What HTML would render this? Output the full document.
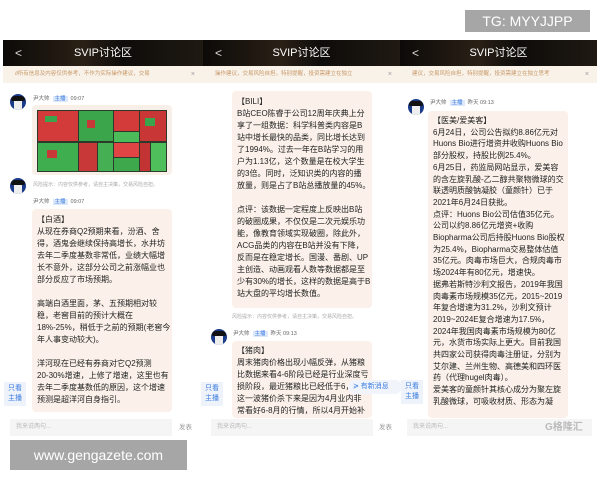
<!DOCTYPE html><html><head><meta charset="utf-8"><style>
*{margin:0;padding:0;box-sizing:border-box}
body{width:600px;height:480px;background:#fff;position:relative;overflow:hidden;font-family:"Liberation Sans","Noto Sans CJK SC",sans-serif;color:#333}
.a{position:absolute}
.hd{position:absolute;top:40px;height:26px;background:linear-gradient(90deg,#0c0a08,#2a2016 40%,#0e0c0a 60%,#1f1912);color:#fff;font-size:11px;text-align:center;line-height:26px}
.hd i{position:absolute;left:12px;top:0;font-style:normal;font-size:12px;color:#ddd}
.nt{position:absolute;top:66px;height:17px;background:#f8f2e9;color:#c9996a;font-size:5.5px;line-height:17px;white-space:nowrap;overflow:hidden;padding-left:6px}
.nt b{position:absolute;right:8px;font-weight:normal;color:#999;font-size:7px}
.av{position:absolute;width:16px;height:16px;border-radius:50%;background:#1a3a8a;overflow:hidden}
.av:after{content:"";position:absolute;left:4px;top:5px;width:8px;height:11px;background:#eee;border-radius:2px}
.av:before{content:"";position:absolute;left:1px;top:2px;width:14px;height:5px;background:#111;border-radius:7px 7px 2px 2px;z-index:1}
.nm{position:absolute;font-size:5.5px;color:#666;white-space:nowrap}
.nm span{background:#dde9fb;color:#3a7be0;padding:0 2px;margin:0 3px}
.bb{position:absolute;background:#fbf1ea;border-radius:4px;font-size:8px;line-height:12px;padding:6px 5px;white-space:nowrap;overflow:hidden;color:#222}
.tip{position:absolute;font-size:5px;color:#aaa;white-space:nowrap}
.only{position:absolute;width:22px;height:24px;background:#eef3fb;color:#3a7be0;font-size:7px;line-height:10px;text-align:center;padding-top:2px}
.in{position:absolute;top:419px;height:17px;background:#f5f5f5;color:#bbb;font-size:6px;line-height:17px;padding-left:6px}
.fb{position:absolute;top:419px;font-size:6.5px;line-height:17px;color:#999}
</style></head><body>
<div class="hd" style="left:3px;width:200px"><i>&lt;</i>SVIP讨论区</div>
<div class="hd" style="left:203px;width:197px"><i>&lt;</i>SVIP讨论区</div>
<div class="hd" style="left:400px;width:197px"><i>&lt;</i>SVIP讨论区</div>
<div class="nt" style="left:3px;width:200px;padding-left:12px">∂所有信息及内容仅供参考，不作为实际操作建议，交易<b>×</b></div>
<div class="nt" style="left:203px;width:197px;padding-left:12px">操作建议，交易风险自担。特别提醒，投资需建立在独立<b>×</b></div>
<div class="nt" style="left:400px;width:197px;padding-left:12px">建议，交易风险自担，特别提醒，投资需建立在独立思考<b>×</b></div>

<!-- panel1 -->
<div class="av" style="left:10px;top:94px"></div>
<div class="nm" style="left:33px;top:94px">尹大帅<span>主播</span>09:07</div>
<div class="a" style="left:32px;top:105px;width:140px;height:70px;background:#f8efe9;border-radius:4px"></div>
<svg class="a" style="left:37px;top:110px" width="130" height="62">
<rect width="130" height="62" fill="#2c3a2c"/>
<rect x="1" y="1" width="40" height="30" fill="#d33a3a"/><rect x="42" y="1" width="34" height="30" fill="#3aa54a"/><rect x="77" y="1" width="25" height="20" fill="#d33a3a"/><rect x="77" y="22" width="25" height="10" fill="#4cbb5a"/><rect x="103" y="1" width="26" height="30" fill="#c83636"/>
<rect x="1" y="33" width="40" height="28" fill="#3fae4e"/><rect x="42" y="33" width="18" height="28" fill="#c93838"/><rect x="61" y="33" width="15" height="28" fill="#44b053"/><rect x="77" y="33" width="25" height="14" fill="#e04444"/><rect x="77" y="48" width="25" height="13" fill="#3da84c"/><rect x="103" y="33" width="10" height="28" fill="#c23434"/><rect x="114" y="33" width="15" height="28" fill="#4fbf5c"/>
<rect x="8" y="6" width="12" height="6" fill="#3aa54a"/><rect x="50" y="10" width="8" height="8" fill="#c93838"/><rect x="10" y="40" width="10" height="8" fill="#c93838"/><rect x="108" y="8" width="10" height="8" fill="#3aa54a"/>
</svg>
<div class="av" style="left:10px;top:178px"></div>
<div class="tip" style="left:33px;top:181px">风险提示：内容仅供参考，请自主决策，交易风险自担。</div>
<div class="nm" style="left:33px;top:197px">尹大帅<span>主播</span>09:07</div>
<div class="bb" style="left:32px;top:209px;width:140px;height:203px;padding-top:5px">【白酒】<br>从现在券商Q2预期来看，汾酒、舍<br>得，酒鬼会继续保持高增长，水井坊<br>去年二季度基数非常低，业绩大幅增<br>长不意外，这部分公司之前涨幅业也<br>部分反应了市场预期。<br><br>高端白酒里面，茅、五预期相对较<br>稳，老窖目前的预计大概在<br>18%-25%，稍低于之前的预期(老窖今<br>年人事变动较大)。<br><br>洋河现在已经有券商对它Q2预测<br>20-30%增速，上修了增速，这里也有<br>去年二季度基数低的原因，这个增速<br>预测是超洋河自身指引。</div>
<div class="only" style="left:4px;top:382px">只看<br>主播</div>
<div class="in" style="left:10px;width:162px">我来说两句...</div>
<div class="fb" style="left:179px">发表</div>

<!-- panel2 -->
<div class="bb" style="left:232px;top:91px;width:140px;height:217px;padding-top:5px">【BILI】<br>B站CEO陈睿于公司12周年庆典上分<br>享了一组数据：科学科普类内容是B<br>站中增长最快的品类，同比增长达到<br>了1994%。过去一年在B站学习的用<br>户为1.13亿，这个数量是在校大学生<br>的3倍。同时，泛知识类的内容的播<br>放量，则是占了B站总播放量的45%。<br><br>点评：该数据一定程度上反映出B站<br>的破圈成果，不仅仅是二次元娱乐功<br>能，像教育领域实现破圈，除此外，<br>ACG品类的内容在B站并没有下降，<br>反而是在稳定增长。国漫、番剧、UP<br>主创造、动画观看人数等数据都是至<br>少有30%的增长，这样的数据是高于B<br>站大盘的平均增长数值。</div>
<div class="tip" style="left:232px;top:313px">风险提示：内容仅供参考，请自主决策，交易风险自担。</div>
<div class="av" style="left:211px;top:329px"></div>
<div class="nm" style="left:233px;top:329px">尹大帅<span>主播</span>昨天 09:13</div>
<div class="bb" style="left:232px;top:341px;width:140px;height:77px;padding-top:4px">【猪肉】<br>周末猪肉价格出现小幅反弹，从猪粮<br>比数据来看4-6阶段已经是行业深度亏<br>损阶段，最近猪粮比已经低于6，<br>这一波猪价杀下来是因为4月业内非<br>常看好6-8月的行情，所以4月开始补</div>
<div class="a" style="left:348px;top:380px;width:54px;height:14px;background:#f1f5fb;border-radius:7px;font-size:7px;line-height:14px;color:#3a7be0;padding-left:5px;white-space:nowrap">≽ 有新消息</div>
<div class="only" style="left:201px;top:382px">只看<br>主播</div>
<div class="only" style="left:401px;top:380px">只看<br>主播</div>
<div class="in" style="left:211px;width:162px">我来说两句...</div>
<div class="fb" style="left:379px">发表</div>

<!-- panel3 -->
<div class="av" style="left:408px;top:99px"></div>
<div class="nm" style="left:430px;top:98px">尹大帅<span>主播</span>昨天 09:13</div>
<div class="bb" style="left:428px;top:111px;width:140px;height:307px;padding-top:4px;line-height:11.7px">【医美/爱美客】<br>6月24日，公司公告拟约8.86亿元对<br>Huons Bio进行增资并收购Huons Bio<br>部分股权，持股比例25.4%。<br>6月25日，药监局网站显示，爱美容<br>的含左旋乳酸-乙二醇共聚物微球的交<br>联透明质酸钠凝胶（童颜针）已于<br>2021年6月24日获批。<br>点评：Huons Bio公司估值35亿元。<br>公司以约8.86亿元增资+收购<br>Biopharma公司后持股Huons Bio股权<br>为25.4%，Biopharma交易整体估值<br>35亿元。肉毒市场巨大，合规肉毒市<br>场2024年有80亿元，增速快。<br>据弗若斯特沙利文报告，2019年我国<br>肉毒素市场规模35亿元，2015~2019<br>年复合增速为31.2%，沙利文预计<br>2019~2024E复合增速为17.5%，<br>2024年我国肉毒素市场规模为80亿<br>元，水货市场实际上更大。目前我国<br>共四家公司获得肉毒注册证，分别为<br>艾尔建、兰州生物、高德美和四环医<br>药（代理hugel肉毒）。<br>爱美客的童颜针其核心成分为聚左旋<br>乳酸微球，可吸收材质、形态为凝</div>
<div class="in" style="left:407px;width:185px">我来说两句...</div>
<div class="a" style="left:545px;top:418px;font-size:10px;color:#bbb;font-weight:bold">G格隆汇</div>

<div class="a" style="left:465px;top:10px;width:125px;height:22px;background:#a6a6a6;color:#fff;font-size:14px;line-height:22px;text-align:center">TG: MYYJJPP</div>
<div class="a" style="left:10px;top:440px;width:177px;height:30px;background:#a6a6a6;color:#fff;font-size:14px;line-height:30px;text-align:center">www.gengazete.com</div>
</body></html>
